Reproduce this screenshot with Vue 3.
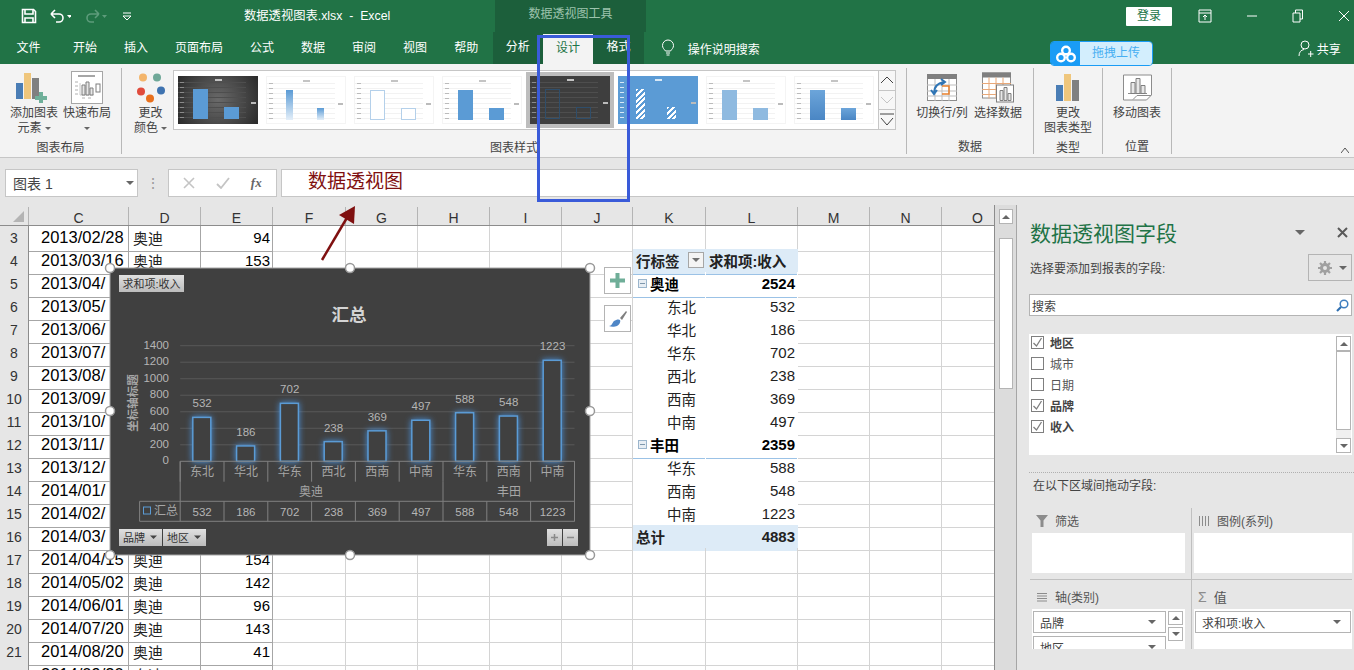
<script setup>
// 透视表行数据
const pivot = {
  4: { k: '行标签', l: '求和项:收入', type: 'head' },
  5: { k: '奥迪', l: 2524, type: 'group' },
  6: { k: '东北', l: 532, type: 'child' },
  7: { k: '华北', l: 186, type: 'child' },
  8: { k: '华东', l: 702, type: 'child' },
  9: { k: '西北', l: 238, type: 'child' },
  10: { k: '西南', l: 369, type: 'child' },
  11: { k: '中南', l: 497, type: 'child' },
  12: { k: '丰田', l: 2359, type: 'group' },
  13: { k: '华东', l: 588, type: 'child' },
  14: { k: '西南', l: 548, type: 'child' },
  15: { k: '中南', l: 1223, type: 'child last' },
  16: { k: '总计', l: 4883, type: 'total' }
}

const sheet = [
  [3, '2013/02/28', '奥迪', 94],
  [4, '2013/03/16', '奥迪', 153],
  [5, '2013/04/'],
  [6, '2013/05/'],
  [7, '2013/06/'],
  [8, '2013/07/'],
  [9, '2013/08/'],
  [10, '2013/09/'],
  [11, '2013/10/'],
  [12, '2013/11/'],
  [13, '2013/12/'],
  [14, '2014/01/'],
  [15, '2014/02/'],
  [16, '2014/03/'],
  [17, '2014/04/15', '奥迪', 154],
  [18, '2014/05/02', '奥迪', 142],
  [19, '2014/06/01', '奥迪', 96],
  [20, '2014/07/20', '奥迪', 143],
  [21, '2014/08/20', '奥迪', 41],
  [22, '2014/09/20', '奥迪', 60]
]
const rows = sheet.map(([no, date, brand, income]) => ({ no, date, brand, income, p: pivot[no] || {} }))

const columns = ['C', 'D', 'E', 'F', 'G', 'H', 'I', 'J', 'K', 'L', 'M', 'N', 'O']

const tabs = ['文件', '开始', '插入', '页面布局', '公式', '数据', '审阅', '视图', '帮助']

// 图表样式缩略图
const thumbs = [
  { cls: 't-dark', bar: 'solid' },
  { cls: '', bar: 'fade' },
  { cls: '', bar: 'outline' },
  { cls: '', bar: 'solid' },
  { cls: 't-black', bar: 'ghost', selected: true },
  { cls: 't-blue', bar: 'hatch' },
  { cls: '', bar: 'pale' },
  { cls: '', bar: 'deep' }
]

const fields = [
  { name: '地区', on: true },
  { name: '城市', on: false },
  { name: '日期', on: false },
  { name: '品牌', on: true },
  { name: '收入', on: true }
]

// 图表坐标
const plotLeft = 180.2
const colW = 43.8
const zeroY = 461.3
const scale = 115.6 / 1400
const series = [
  { name: '东北', v: 532 },
  { name: '华北', v: 186 },
  { name: '华东', v: 702 },
  { name: '西北', v: 238 },
  { name: '西南', v: 369 },
  { name: '中南', v: 497 },
  { name: '华东', v: 588 },
  { name: '西南', v: 548 },
  { name: '中南', v: 1223 }
]
const ticks = [0, 200, 400, 600, 800, 1000, 1200, 1400]
const colX = (i) => plotLeft + i * colW
const barY = (v) => zeroY - v * scale
const handles = [
  [110, 268], [350, 268], [590, 268],
  [110, 411], [590, 411],
  [110, 555], [350, 555], [590, 555]
]
</script>

<template>
  <div class="excel">
    <header class="titlebar">
      <div class="qat">
        <svg width="16" height="16" viewBox="0 0 16 16" class="save">
          <path d="M1.5 1.5h11l2 2v11h-13z" fill="none" stroke="#fff" stroke-width="1.6" />
          <path d="M4 2v4h8V2M4 15v-5h8v5" fill="none" stroke="#fff" stroke-width="1.6" />
        </svg>
        <svg width="22" height="16" viewBox="0 0 22 16" class="undo">
          <path d="M2 6h8a4 4 0 0 1 0 8H7M2 6l4-4M2 6l4 4" fill="none" stroke="#fff" stroke-width="1.6" />
          <path d="M18 7h5l-2.5 3z" fill="#fff" />
        </svg>
        <svg width="22" height="16" viewBox="0 0 22 16" class="redo">
          <path d="M14 6H6a4 4 0 0 0 0 8h3M14 6l-4-4M14 6l-4 4" fill="none" stroke="#5d9c7b" stroke-width="1.6" />
          <path d="M17 7h5l-2.500 3z" fill="#5d9c7b" />
        </svg>
        <svg width="8" height="9" viewBox="0 0 8 9" class="qat-more">
          <path d="M0 1h8" stroke="#fff" />
          <path d="M0 4h8L4 8z" fill="none" stroke="#fff" />
        </svg>
      </div>
      <div class="doc-title">数据透视图表.xlsx &nbsp;-&nbsp; Excel</div>
      <div class="tool-title">数据透视图工具</div>
      <div class="login">登录</div>
      <div class="win-btns">
        <svg width="14" height="14" viewBox="0 0 14 14">
          <path d="M1 1h12v12H1zM1 4h12M7 11V6M5 8l2-2 2 2" fill="none" stroke="#fff" />
        </svg>
        <svg width="12" height="14" viewBox="0 0 12 14"><path d="M1 7h10" stroke="#fff" /></svg>
        <svg width="12" height="14" viewBox="0 0 12 14">
          <path d="M1 4h7v9H1zM3.500 4V1h7v9H8" fill="none" stroke="#fff" />
        </svg>
        <svg width="12" height="14" viewBox="0 0 12 14"><path d="M1 2l10 10M11 2L1 12" stroke="#fff" /></svg>
      </div>
    </header>

    <nav class="tabbar">
      <span v-for="t in tabs" :key="t" class="tab">{{ t }}</span>
      <div class="context-tabs">
        <span class="tab">分析</span>
        <span class="tab active">设计</span>
        <span class="tab">格式</span>
      </div>
      <svg class="bulb" width="14" height="18" viewBox="0 0 14 18">
        <path d="M4.500 12C3 10 1.500 9 1.500 6.500a5.500 5.500 0 0 1 11 0C12.500 9 11 10 9.500 12zM5 14h4M5.500 16h3" fill="none" stroke="#fff" />
      </svg>
      <span class="search-tip">操作说明搜索</span>
      <span class="share">
        <svg width="16" height="17" viewBox="0 0 16 17">
          <circle cx="7" cy="5" r="4" fill="none" stroke="#fff" />
          <path d="M1 16c0-4 2-6 5-6.500M10 14h5.500M12.700 11v6" fill="none" stroke="#fff" />
        </svg>
        共享
      </span>
    </nav>

    <section class="ribbon">
      <div class="rgroup g-layout">
        <div class="rbody">
          <div class="rbtn w54">
            <svg width="36" height="31" viewBox="0 0 36 31">
              <rect x="0" y="11" width="7" height="16" fill="#4a7db5" />
              <rect x="8" y="1" width="7" height="26" fill="#efc67c" />
              <rect x="16" y="6" width="7" height="21" fill="#808080" />
              <path d="M23 20h4v4h4v4h-4v3h-4v-3h-4v-4h4z" fill="#6fb09a" />
            </svg>
            <span>添加图表</span>
            <span>元素<i class="caret small"></i></span>
          </div>
          <div class="rbtn w52">
            <svg width="32" height="33" viewBox="0 0 32 33">
              <rect x="0.500" y="0.500" width="31" height="32" fill="#fff" stroke="#a6a6a6" />
              <path d="M7 5h17" stroke="#a6a6a6" stroke-width="2" />
              <path d="M4 11h3M4 15h3M4 19h3M4 23h3M11 27h3M17 27h3" stroke="#b0b0b0" />
              <path d="M9 12v12M9 24h14" stroke="#c8c8c8" />
              <path d="M11 14h3v10h-3zM15 11h3v13h-3zM19 17h3v7h-3z" fill="#e8e8e8" stroke="#7f7f7f" />
              <rect x="25" y="13" width="4" height="8" fill="#fff" stroke="#7f7f7f" />
            </svg>
            <span>快速布局</span>
            <i class="caret small alone"></i>
          </div>
        </div>
        <div class="rlabel">图表布局</div>
      </div>

      <div class="rgroup g-style">
        <div class="rbody">
          <div class="rbtn color-btn">
            <svg width="30" height="30" viewBox="0 0 30 30">
              <circle cx="7" cy="5" r="4" fill="#f3b56b" />
              <circle cx="21" cy="5" r="4" fill="#6fa898" />
              <circle cx="5" cy="19" r="4" fill="#e04b3c" />
              <circle cx="25" cy="18" r="4" fill="#3f73b0" />
              <circle cx="14" cy="26" r="4" fill="#e8701d" />
            </svg>
            <span>更改</span>
            <span>颜色<i class="caret small"></i></span>
          </div>
          <div class="gallery">
            <div class="thumbs">
              <div v-for="(t, i) in thumbs" :key="i" class="thumb-wrap" :class="{ selected: t.selected }">
                <div class="thumb" :class="t.cls">
                  <i class="thumb-title"></i>
                  <div class="thumb-plot">
                    <i class="thumb-bar tall" :class="t.bar"></i>
                    <i class="thumb-bar short" :class="t.bar"></i>
                  </div>
                  <i class="thumb-legend"></i>
                </div>
              </div>
            </div>
            <div class="gallery-btns">
              <div class="gbtn">
                <svg width="14" height="10" viewBox="0 0 14 10"><path d="M1 8l6-6 6 6" fill="none" stroke="#444" /></svg>
              </div>
              <div class="gbtn">
                <svg width="14" height="10" viewBox="0 0 14 10"><path d="M1 2l6 6 6-6" fill="none" stroke="#c4c4c4" /></svg>
              </div>
              <div class="gbtn">
                <svg width="14" height="14" viewBox="0 0 14 14"><path d="M0 1h14M1 5l6 7 6-7" fill="none" stroke="#444" /></svg>
              </div>
            </div>
          </div>
        </div>
        <div class="rlabel">图表样式</div>
      </div>

      <div class="rgroup g-data">
        <div class="rbody">
          <div class="rbtn w56">
            <svg width="30" height="27" viewBox="0 0 30 27">
              <rect x="0.500" y="0.500" width="29" height="26" fill="#fff" stroke="#8c8c8c" />
              <rect x="0" y="0" width="30" height="5" fill="#7f7f7f" />
              <path d="M0 11h30M0 17h30M0 22h30M8 5v22M15 5v22M22 5v22" stroke="#bdbdbd" />
              <path d="M15 20h7v-8h-7" fill="none" stroke="#e8802c" stroke-width="1.500" />
              <path d="M7 19c0-7 4-10 10-11M14 5l4 3-4 3M4 16l3 4 3-4" fill="none" stroke="#2f75b5" stroke-width="2" />
            </svg>
            <span>切换行/列</span>
          </div>
          <div class="rbtn w56">
            <svg width="32" height="30" viewBox="0 0 32 30">
              <rect x="0.500" y="0.500" width="28" height="25" fill="#fff" stroke="#8c8c8c" />
              <rect x="0" y="0" width="29" height="5" fill="#7f7f7f" />
              <path d="M0 11h29M0 17h29M0 22h29M7 5v21M14 5v21M21 5v21" stroke="#e8a878" />
              <rect x="14.500" y="12.500" width="17" height="17" fill="#fff" stroke="#7f7f7f" />
              <path d="M18 18h3v10h-3zM22 15h3v13h-3zM26 21h3v7h-3z" fill="#e8e8e8" stroke="#7f7f7f" />
            </svg>
            <span>选择数据</span>
          </div>
        </div>
        <div class="rlabel">数据</div>
      </div>

      <div class="rgroup g-type">
        <div class="rbody">
          <div class="rbtn w56">
            <svg width="24" height="27" viewBox="0 0 24 27">
              <rect x="0" y="11" width="7" height="16" fill="#4a7db5" />
              <rect x="8" y="0" width="7" height="27" fill="#efc67c" />
              <rect x="16" y="6" width="7" height="21" fill="#808080" />
            </svg>
            <span>更改</span>
            <span>图表类型</span>
          </div>
        </div>
        <div class="rlabel">类型</div>
      </div>

      <div class="rgroup g-pos">
        <div class="rbody">
          <div class="rbtn w56">
            <svg width="29" height="26" viewBox="0 0 29 26">
              <path d="M0.500 0.500h28v20l-5 5H0.500z" fill="#fff" stroke="#8c8c8c" />
              <path d="M5 19h19" stroke="#8c8c8c" />
              <path d="M8 8h4v11H8zM13 4h4v15h-4zM18 11h4v8h-4z" fill="#e8e8e8" stroke="#7f7f7f" />
              <path d="M10 25l4-4h14" fill="none" stroke="#8c8c8c" />
            </svg>
            <span>移动图表</span>
          </div>
        </div>
        <div class="rlabel">位置</div>
      </div>

      <svg class="collapse" width="8" height="6" viewBox="0 0 8 6"><path d="M0 6l4-5 4 5" fill="none" stroke="#555" /></svg>
    </section>

    <section class="formula-band">
      <div class="name-box">
        <span>图表 1</span>
        <i class="caret"></i>
      </div>
      <div class="band-dots">⋮</div>
      <div class="fx-box">
        <svg width="12" height="12" viewBox="0 0 12 12"><path d="M1 1l10 10M11 1L1 11" stroke="#c4c4c4" stroke-width="1.600" /></svg>
        <svg width="14" height="12" viewBox="0 0 14 12"><path d="M1 7l4 4 8-10" fill="none" stroke="#c4c4c4" stroke-width="1.800" /></svg>
        <span class="fx">fx</span>
      </div>
      <div class="formula-input">数据透视图</div>
    </section>

    <main class="workspace">
      <div class="sheet">
        <div class="col-head">
          <div class="corner"><i></i></div>
          <div v-for="c in columns" :key="c" class="col-letter">{{ c }}</div>
        </div>
        <div v-for="r in rows" :key="r.no" class="row">
          <div class="row-no">{{ r.no }}</div>
          <div class="cell tbl date">{{ r.date }}</div>
          <div class="cell tbl brand">{{ r.brand }}</div>
          <div class="cell tbl num">{{ r.income }}</div>
          <div class="cell"></div>
          <div class="cell"></div>
          <div class="cell"></div>
          <div class="cell"></div>
          <div class="cell"></div>
          <div class="cell pk" :class="r.p.type">
            <i v-if="r.p.type === 'group'" class="fold"></i>{{ r.p.k }}<i v-if="r.p.type === 'head'" class="filter-btn"></i>
          </div>
          <div class="cell pl" :class="r.p.type">{{ r.p.l }}</div>
          <div class="cell"></div>
          <div class="cell"></div>
          <div class="cell"></div>
        </div>

        <svg class="chart" width="500" height="308" viewBox="100 258 500 308">
          <defs>
            <linearGradient id="chip" x1="0" y1="0" x2="0" y2="1">
              <stop offset="0" stop-color="#e0e0e0" />
              <stop offset="1" stop-color="#bcbcbc" />
            </linearGradient>
          </defs>
          <rect x="110" y="268" width="480" height="287" fill="#404040" stroke="#a6a6a6" />

          <rect x="119" y="275" width="65" height="17" fill="url(#chip)" />
          <text x="151.500" y="288" class="chip-text" text-anchor="middle">求和项:收入</text>

          <text x="349" y="321" class="chart-title" text-anchor="middle">汇总</text>

          <line v-for="t in ticks.slice(1)" :key="t" :x1="plotLeft" :x2="574.500" :y1="barY(t)" :y2="barY(t)" class="gridline" />
          <text v-for="t in ticks" :key="'y' + t" x="169" :y="barY(t) + 3" class="tick" text-anchor="end">{{ t }}</text>
          <text class="axis-title" text-anchor="middle" transform="translate(137 403) rotate(-90)">坐标轴标题</text>

          <g v-for="(s, i) in series" :key="i">
            <rect :x="colX(i) + 12.600" :y="barY(s.v)" width="18" :height="s.v * scale" class="bar" />
            <text :x="colX(i) + 21.900" :y="barY(s.v) - 10" class="tick" text-anchor="middle">{{ s.v }}</text>
            <text :x="colX(i) + 21.900" y="476" class="tick cat" text-anchor="middle">{{ s.name }}</text>
            <text :x="colX(i) + 21.900" y="515.500" class="tick" text-anchor="middle">{{ s.v }}</text>
            <line :x1="colX(i)" :x2="colX(i)" y1="461.300" y2="481.700" class="tline" />
            <line :x1="colX(i)" :x2="colX(i)" y1="501.300" y2="521.300" class="tline" />
          </g>
          <path d="M180.200 461.300H574.500V521.300H139.600V501.300H574.500M180.200 461.300V501.300M574.500 461.300V521.300M443 481.700V501.300" class="tline" fill="none" />
          <text x="311" y="496" class="tick cat" text-anchor="middle">奥迪</text>
          <text x="509" y="496" class="tick cat" text-anchor="middle">丰田</text>
          <rect x="143.500" y="507" width="7" height="7" fill="none" stroke="#5b9bd5" />
          <text x="154" y="515" class="tick cat">汇总</text>

          <rect x="119" y="529" width="43" height="17" fill="url(#chip)" />
          <text x="123" y="542" class="chip-text">品牌</text>
          <path d="M150 535.500h7l-3.500 3.500z" fill="#444" />
          <rect x="163" y="529" width="43" height="17" fill="url(#chip)" />
          <text x="167" y="542" class="chip-text">地区</text>
          <path d="M194 535.500h7l-3.500 3.500z" fill="#444" />
          <rect x="547" y="529" width="15" height="17" fill="url(#chip)" />
          <rect x="563" y="529" width="15" height="17" fill="url(#chip)" />
          <path d="M551 537.500h7M554.500 534v7" stroke="#8a8a8a" stroke-width="1.500" />
          <path d="M567 537.500h7" stroke="#8a8a8a" stroke-width="1.500" />

          <circle v-for="(h, i) in handles" :key="'h' + i" :cx="h[0]" :cy="h[1]" r="4.500" class="handle" />
        </svg>

        <div class="chart-side plus">
          <svg width="15" height="15" viewBox="0 0 15 15"><path d="M5.500 0h4v5.500H15v4H9.500V15h-4V9.500H0v-4h5.500z" fill="#6fae98" /></svg>
        </div>
        <div class="chart-side brush">
          <svg width="20" height="20" viewBox="0 0 20 20">
            <path d="M12 9l6-7 1 1-5 8z" fill="#7f7f7f" />
            <path d="M1 17c3 0 3-3 5-5 2-1.500 5-2 6-1 1 2-1 5-3 6-2 .8-6 1-8 0z" fill="#4f86c6" />
          </svg>
        </div>
      </div>

      <div class="vscroll">
        <div class="vs-up"><i class="tri-up"></i></div>
        <div class="vs-thumb"></div>
      </div>

      <aside class="panel">
        <div class="panel-head">
          <h2>数据透视图字段</h2>
          <i class="caret big"></i>
          <svg width="11" height="11" viewBox="0 0 11 11"><path d="M1 1l9 9M10 1l-9 9" stroke="#595959" stroke-width="2" /></svg>
        </div>
        <div class="panel-sub">
          <span>选择要添加到报表的字段:</span>
          <div class="gear-btn">
            <svg width="14" height="14" viewBox="0 0 14 14">
              <circle cx="7" cy="7" r="3.500" fill="none" stroke="#a0a0a0" stroke-width="3" />
              <path d="M7 0v3M7 11v3M0 7h3M11 7h3M2 2l2 2M10 10l2 2M12 2l-2 2M4 10l-2 2" stroke="#a0a0a0" stroke-width="2.200" />
            </svg>
            <i class="caret"></i>
          </div>
        </div>
        <div class="search">
          <span>搜索</span>
          <svg width="13" height="13" viewBox="0 0 13 13">
            <circle cx="8" cy="5" r="3.800" fill="none" stroke="#3f7fc0" stroke-width="1.500" />
            <path d="M5 8l-4 4" stroke="#2f6fb0" stroke-width="2.200" />
          </svg>
        </div>
        <div class="field-list">
          <div class="fields">
            <label v-for="f in fields" :key="f.name" class="field" :class="{ on: f.on }">
              <span class="check">
                <svg v-if="f.on" width="11" height="11" viewBox="0 0 11 11"><path d="M1.500 6l3 3 5-8" fill="none" stroke="#7f7f7f" stroke-width="1.300" /></svg>
              </span>
              {{ f.name }}
            </label>
          </div>
          <div class="list-scroll">
            <div class="ls-btn"><i class="tri-up"></i></div>
            <div class="ls-thumb"></div>
            <div class="ls-gap"></div>
            <div class="ls-btn"><i class="caret"></i></div>
          </div>
        </div>
        <div class="dotted"></div>
        <div class="drag-tip">在以下区域间拖动字段:</div>
        <div class="areas">
          <div class="area sep-r sep-b">
            <div class="area-title">
              <svg width="12" height="12" viewBox="0 0 12 12"><path d="M0 0h12L7.500 5.500V12h-3V5.500z" fill="#8c8c8c" /></svg>
              筛选
            </div>
            <div class="area-box"></div>
          </div>
          <div class="area sep-b">
            <div class="area-title">
              <svg width="12" height="12" viewBox="0 0 12 12"><path d="M1.500 1v10M4.500 1v10M7.500 1v10M10.500 1v10" stroke="#8c8c8c" /></svg>
              图例(系列)
            </div>
            <div class="area-box"></div>
          </div>
          <div class="area sep-r">
            <div class="area-title">
              <svg width="12" height="12" viewBox="0 0 12 12"><path d="M1 2.500h10M1 5h10M1 7.500h10M1 10h10" stroke="#8c8c8c" /></svg>
              轴(类别)
            </div>
            <div class="area-box axis-box">
              <div class="axis-items">
                <div class="item">品牌<i class="caret"></i></div>
                <div class="item">地区<i class="caret"></i></div>
              </div>
              <div class="axis-scroll">
                <div class="ls-btn"><i class="tri-up"></i></div>
                <div class="ls-btn"><i class="caret"></i></div>
              </div>
            </div>
          </div>
          <div class="area">
            <div class="area-title value-title">
              <span class="sigma">Σ</span>
              值
            </div>
            <div class="area-box value-box">
              <div class="item">求和项:收入<i class="caret"></i></div>
            </div>
          </div>
        </div>
      </aside>
    </main>

    <!-- 拖拽上传悬浮条 -->
    <div class="upload">
      <div class="upload-icon">
        <svg width="20" height="18" viewBox="0 0 20 18">
          <circle cx="10" cy="5.500" r="3.800" fill="none" stroke="#fff" stroke-width="2.400" />
          <circle cx="5" cy="12.500" r="3.800" fill="none" stroke="#fff" stroke-width="2.400" />
          <circle cx="15" cy="12.500" r="3.800" fill="none" stroke="#fff" stroke-width="2.400" />
        </svg>
      </div>
      <div class="upload-text">拖拽上传</div>
    </div>

    <!-- 截图上的标注 -->
    <div class="mark-rect"></div>
    <svg class="mark-arrow" width="40" height="58" viewBox="0 0 40 58">
      <path d="M2 56L28 12" stroke="#7f1010" stroke-width="2.500" />
      <path d="M35 2L34 20 19 11z" fill="#7f1010" />
    </svg>
  </div>
</template>

<style scoped>
.excel {
  position: relative;
  width: 1354px;
  height: 670px;
  overflow: hidden;
  background: #e6e6e6;
  color: #444;
  font-family: "Liberation Sans", "Noto Sans CJK SC", sans-serif;
  font-size: 12px;
}

i {
  font-style: normal;
}

/* 标题栏 */
.titlebar {
  display: flex;
  align-items: center;
  height: 32px;
  background: #217346;
  color: #fff;
}
.qat {
  display: flex;
  align-items: center;
  width: 244px;
  padding-left: 21px;
  box-sizing: border-box;
}
.save {
  margin-right: 12px;
}
.undo {
  margin-right: 14px;
}
.qat-more {
  margin-left: 16px;
}
.doc-title {
  width: 251px;
  margin-top: -3px;
  font-size: 12.300px;
}
.tool-title {
  width: 151px;
  height: 32px;
  line-height: 28px;
  text-align: center;
  background: #1c5f3b;
  color: #9cc3ad;
}
.login {
  width: 46px;
  height: 19px;
  margin-left: 480px;
  background: #fff;
  color: #217346;
  line-height: 19px;
  text-align: center;
  border-radius: 1px;
}
.win-btns {
  display: flex;
  align-items: center;
  gap: 34px;
  margin-left: 26px;
}

/* 选项卡 */
.tabbar {
  display: flex;
  align-items: center;
  height: 32px;
  padding-left: 3px;
  background: #217346;
  color: #fff;
}
.tab {
  display: block;
  padding: 0 13.500px;
  line-height: 30px;
  white-space: nowrap;
}
.tab:first-child {
  padding-right: 19px;
}
.context-tabs {
  display: flex;
  align-items: stretch;
  width: 151px;
  height: 32px;
  margin-left: 1px;
  padding-left: 0;
  background: #1c5f3b;
  box-sizing: border-box;
}
.context-tabs .tab {
  width: 50.300px;
  padding: 0;
  text-align: center;
}
.context-tabs .tab.active {
  margin-top: 2px;
  background: #f3f3f3;
  color: #217346;
  line-height: 28px;
}
.bulb {
  margin-left: 17px;
}
.search-tip {
  margin-left: 13px;
}
.share {
  display: flex;
  align-items: center;
  gap: 3px;
  margin-left: 538px;
}

/* 功能区 */
.ribbon {
  position: relative;
  display: flex;
  height: 94px;
  background: #f3f3f3;
  border-bottom: 1px solid #c6c6c6;
  box-sizing: border-box;
}
.rgroup {
  display: flex;
  flex-direction: column;
  height: 86px;
  margin-top: 4px;
  border-right: 1px solid #b8b8b8;
  box-sizing: border-box;
}
.g-layout { width: 122px; }
.g-style { width: 785px; }
.g-data { width: 127px; }
.g-type { width: 69px; }
.g-pos { width: 69px; }
.rbody {
  display: flex;
  flex: 1;
  justify-content: center;
}
.g-layout .rbody {
  justify-content: flex-start;
  padding-left: 7px;
}
.g-style .rbody {
  justify-content: flex-start;
  padding-left: 6px;
}
.rlabel {
  height: 19px;
  line-height: 24px;
  text-align: center;
}
.rbtn {
  display: flex;
  flex-direction: column;
  align-items: center;
  line-height: 15px;
  white-space: nowrap;
  padding-top: 3px;
}
.rbtn svg {
  height: 33px;
  margin-bottom: 2px;
}
.w54 { width: 54px; }
.w52 { width: 52px; }
.w56 { width: 56px; }
.color-btn {
  width: 45px;
}
.caret {
  display: inline-block;
  width: 0;
  height: 0;
  border-left: 4px solid transparent;
  border-right: 4px solid transparent;
  border-top: 4px solid #666;
}
.caret.small {
  margin-left: 3px;
  border-left-width: 3px;
  border-right-width: 3px;
  border-top-width: 3px;
  vertical-align: middle;
}
.caret.small.alone {
  margin: 6px 0 0;
}
.gallery {
  display: flex;
  width: 723px;
  height: 60px;
  margin-top: 2px;
  background: #fff;
  border: 1px solid #c6c6c6;
  box-sizing: border-box;
}
.thumbs {
  display: flex;
  flex: 1;
  align-items: center;
  padding-left: 4px;
  gap: 8px;
}
.thumb-wrap {
  display: flex;
}
.thumb-wrap.selected {
  margin: 0 -4px;
  padding: 4px;
  background: #bdbdbd;
}
.thumb {
  position: relative;
  display: flex;
  flex-direction: column;
  align-items: center;
  width: 80px;
  height: 48px;
  box-sizing: border-box;
  border: 1px solid #f4f4f4;
  background: #fff;
}
.thumb-title {
  width: 7px;
  height: 2px;
  margin-top: 3px;
  background: #c4c4c4;
}
.thumb-legend {
  position: absolute;
  right: 2px;
  top: 26px;
  width: 5px;
  height: 2px;
  background: #bbb;
}
.thumb-plot {
  display: flex;
  align-items: flex-end;
  align-self: flex-start;
  gap: 16px;
  width: 68px;
  height: 37px;
  margin: 1px 0 0 0;
  padding-left: 15px;
  box-sizing: border-box;
  background:
    repeating-linear-gradient(to bottom, #bbb 0 1px, transparent 1px 5px) 2px 0 / 4px 100% no-repeat,
    repeating-linear-gradient(to bottom, #f2f2f2 0 1px, transparent 1px 5px);
}
.thumb-bar {
  width: 15px;
}
.thumb-bar.tall { height: 30px; }
.thumb-bar.short { height: 12px; }
.thumb-bar.solid { background: #5b9bd5; }
.thumb-bar.fade { width: 7px; margin: 0 4px; background: linear-gradient(to bottom, #5b9bd5, #e4eff9); }
.thumb-bar.outline { background: #fff; border: 1px solid #b4d0ea; box-sizing: border-box; }
.thumb-bar.pale { background: #8fbae0; }
.thumb-bar.deep { background: linear-gradient(to bottom, #6ca5da, #4a86c4); }
.thumb-bar.ghost { background: transparent; border: 1px solid #2f4e6b; box-sizing: border-box; }
.thumb-bar.hatch { width: 9px; margin: 0 3px; background: repeating-linear-gradient(135deg, #fff 0 2px, #5b9bd5 2px 4px); }
.t-dark {
  border: 0;
  background: radial-gradient(circle, #6a6a6a, #2a2a2a);
}
.t-dark .thumb-plot,
.t-black .thumb-plot {
  background:
    repeating-linear-gradient(to bottom, #8a8a8a 0 1px, transparent 1px 5px) 2px 0 / 4px 100% no-repeat,
    repeating-linear-gradient(to bottom, #4e4e4e 0 1px, transparent 1px 5px);
}
.t-black {
  border: 0;
  background: #3e3e3e;
}
.t-blue {
  border: 0;
  background: #5b9bd5;
}
.t-blue .thumb-plot {
  background: repeating-linear-gradient(to bottom, #d8e8f6 0 1px, transparent 1px 5px) 2px 0 / 4px 100% no-repeat;
}
.t-blue .thumb-title {
  background: #d8e8f6;
}
.gallery-btns {
  display: flex;
  flex-direction: column;
  width: 17px;
}
.gbtn {
  display: flex;
  flex: 1;
  align-items: center;
  justify-content: center;
  background: #f7f7f7;
  border-left: 1px solid #c6c6c6;
  border-bottom: 1px solid #c6c6c6;
}
.gbtn:last-child {
  border-bottom: 0;
}
.collapse {
  position: absolute;
  right: 5px;
  bottom: 4px;
}

/* 编辑栏 */
.formula-band {
  display: flex;
  align-items: flex-start;
  height: 47px;
  padding: 11px 0 0 5px;
  box-sizing: border-box;
  background: #e6e6e6;
}
.name-box {
  display: flex;
  align-items: center;
  justify-content: space-between;
  width: 133px;
  height: 28px;
  padding: 0 3px 0 7px;
  box-sizing: border-box;
  background: #fff;
  border: 1px solid #c6c6c6;
  font-size: 14px;
}
.band-dots {
  width: 30px;
  line-height: 28px;
  text-align: center;
  color: #999;
  font-size: 14px;
}
.fx-box {
  display: flex;
  align-items: center;
  justify-content: space-around;
  width: 109px;
  height: 28px;
  padding: 0 4px;
  box-sizing: border-box;
  background: #fff;
  border: 1px solid #c6c6c6;
}
.fx {
  font-family: "Liberation Serif", serif;
  font-style: italic;
  font-weight: 700;
  font-size: 13px;
  color: #666;
}
.formula-input {
  flex: 1;
  height: 28px;
  margin-left: 4px;
  padding-left: 26px;
  box-sizing: border-box;
  background: #fff;
  border: 1px solid #c6c6c6;
  border-right: 0;
  color: #7f1010;
  font-size: 19px;
  line-height: 23px;
}

/* 工作表 */
.workspace {
  display: flex;
  height: 465px;
}
.sheet {
  position: relative;
  width: 995px;
  overflow: hidden;
  border-right: 1px solid #8c8c8c;
  box-sizing: border-box;
  background: #fff;
}
.col-head,
.row {
  display: grid;
  grid-template-columns: 29px 100px 72px 72px 73px 72px 72px 72px 71px 73px 92px 72px 72px 72px;
  width: 1014px;
}
.col-head {
  height: 20px;
  background: #e6e6e6;
  border-bottom: 1px solid #8c8c8c;
}
.corner {
  position: relative;
  margin-top: 2px;
  border-right: 1px solid #b4b4b4;
}
.corner i {
  position: absolute;
  right: 4px;
  bottom: 3px;
  width: 0;
  height: 0;
  border-left: 11px solid transparent;
  border-bottom: 11px solid #b4b4b4;
}
.col-letter {
  margin-top: 2px;
  border-right: 1px solid #b4b4b4;
  text-align: center;
  font-size: 14px;
  line-height: 22px;
  color: #333;
  height: 18px;
}
.row {
  height: 23px;
}
.row-no {
  background: #e6e6e6;
  border-right: 1px solid #8c8c8c;
  border-bottom: 1px solid #b4b4b4;
  box-sizing: border-box;
  text-align: center;
  line-height: 25px;
  font-size: 14px;
  color: #333;
}
.cell {
  display: flex;
  align-items: center;
  box-sizing: border-box;
  padding-bottom: 3px;
  border-right: 1px solid #d4d4d4;
  border-bottom: 1px solid #d4d4d4;
  color: #000;
  font-size: 15px;
  white-space: nowrap;
  overflow: hidden;
}
.cell.tbl {
  border-color: #a6a6a6;
}
.date {
  padding-left: 12px;
  font-size: 16.500px;
}
.brand {
  padding-left: 4px;
  font-size: 15px;
  color: #222;
}
.num {
  justify-content: flex-end;
  padding-right: 2px;
  font-size: 15px;
}
.pk {
  padding-left: 3px;
  font-size: 14.500px;
  color: #222;
}
.pl {
  justify-content: flex-end;
  padding-right: 2px;
  font-size: 15px;
  color: #222;
}
.pk.child {
  padding-left: 34px;
}
.pk.child,
.pl.child {
  border-color: #fff;
}
.pk.last,
.pl.last {
  border-bottom-color: #9bc2e6;
}
.pk.head,
.pl.head,
.pk.total,
.pl.total {
  background: #ddebf7;
  font-weight: 700;
  border-right-color: #ddebf7;
}
.pk.total,
.pl.total {
  border-bottom-color: #ddebf7;
}
.pk.head,
.pl.head {
  border-bottom-color: #9bc2e6;
}
.pl.head {
  justify-content: flex-start;
  padding: 0 0 3px 3px;
  font-size: 14.500px;
}
.pk.group,
.pl.group {
  font-weight: 700;
  color: #000;
  border-right-color: #fff;
  border-bottom-color: #9bc2e6;
}
.pk.group {
  padding-left: 2px;
}
.fold {
  display: inline-block;
  width: 9px;
  height: 9px;
  margin: 0 3px;
  box-sizing: border-box;
  border: 1px solid #9bb5cc;
  background: linear-gradient(#7f98ad, #7f98ad) center / 5px 1px no-repeat #e8eef4;
}
.filter-btn {
  display: block;
  width: 16px;
  height: 16px;
  margin-left: 8px;
  box-sizing: border-box;
  border: 1px solid #a6a6a6;
  background: #f4f4f4;
  position: relative;
}
.filter-btn::after {
  content: "";
  position: absolute;
  left: 3px;
  top: 5px;
  border-left: 4px solid transparent;
  border-right: 4px solid transparent;
  border-top: 4px solid #707070;
}

/* 图表层 */
.chart {
  position: absolute;
  left: 100px;
  top: 53px;
}
.chart text {
  font-family: "Liberation Sans", "Noto Sans CJK SC", sans-serif;
}
.chart-title {
  font-size: 17.500px;
  font-weight: 700;
  fill: #d4d4d4;
}
.tick {
  font-size: 11.500px;
  fill: #b5b5b5;
}
.cat {
  font-size: 12px;
  fill: #a6a6a6;
}
.axis-title {
  font-size: 11.500px;
  font-weight: 700;
  fill: #a6a6a6;
}
.chip-text {
  font-size: 11px;
  fill: #333;
}
.gridline {
  stroke: #585858;
}
.tline {
  stroke: #808080;
}
.bar {
  fill: #404040;
  stroke: #5b9bd5;
  stroke-width: 1.500;
  filter: drop-shadow(0 0 3px #4a90d9);
}
.handle {
  fill: #fff;
  stroke: #999;
  stroke-width: 1.500;
}
.chart-side {
  position: absolute;
  left: 604px;
  display: flex;
  align-items: center;
  justify-content: center;
  width: 27px;
  height: 27px;
  box-sizing: border-box;
  background: #fff;
  border: 1px solid #b4b4b4;
}
.chart-side.plus {
  top: 62px;
}
.chart-side.brush {
  top: 100px;
}

/* 纵向滚动条 */
.vscroll {
  display: flex;
  flex-direction: column;
  align-items: center;
  width: 21px;
  padding-top: 4px;
  background: #dcdcdc;
  box-sizing: border-box;
}
.vs-up {
  display: flex;
  align-items: center;
  justify-content: center;
  width: 14px;
  height: 15px;
  background: #fff;
  border: 1px solid #b4b4b4;
  box-sizing: border-box;
}
.tri-up {
  display: block;
  width: 0;
  height: 0;
  border-left: 4px solid transparent;
  border-right: 4px solid transparent;
  border-bottom: 4px solid #666;
}
.vs-thumb {
  width: 14px;
  height: 151px;
  margin-top: 14px;
  background: #fff;
  border: 1px solid #b4b4b4;
  box-sizing: border-box;
}

/* 字段面板 */
.panel {
  flex: 1;
  padding: 16px 2px 0 13px;
  background: #e6e6e6;
  border-left: 1px solid #a6a6a6;
  box-sizing: border-box;
}
.panel-head {
  display: flex;
  align-items: center;
  height: 22px;
}
.panel-head h2 {
  flex: 1;
  margin: 0;
  font-size: 21px;
  font-weight: 400;
  color: #217346;
  white-space: nowrap;
}
.panel-head .caret.big {
  border-left-width: 5px;
  border-right-width: 5px;
  border-top-width: 5px;
  margin-right: 32px;
}
.panel-head svg {
  margin-right: 4px;
}
.panel-sub {
  display: flex;
  align-items: center;
  justify-content: space-between;
  height: 27px;
  margin-top: 11px;
}
.gear-btn {
  display: flex;
  align-items: center;
  justify-content: space-between;
  width: 44px;
  height: 27px;
  padding: 0 4px 0 9px;
  box-sizing: border-box;
  border: 1px solid #b4b4b4;
}
.search {
  display: flex;
  align-items: center;
  justify-content: space-between;
  height: 22px;
  margin: 13px 0 0 -1px;
  padding: 0 2px;
  box-sizing: border-box;
  background: #fff;
  border: 1px solid #b4b4b4;
}
.field-list {
  display: flex;
  justify-content: space-between;
  height: 121px;
  margin: 18px 0 0 -1px;
  background: #fff;
}
.fields {
  display: flex;
  flex-direction: column;
  margin-top: -2px;
}
.field {
  display: flex;
  align-items: center;
  gap: 6px;
  height: 21px;
  padding-left: 2px;
  color: #555;
}
.field.on {
  font-weight: 700;
  color: #444;
}
.check {
  display: flex;
  align-items: center;
  justify-content: center;
  width: 13px;
  height: 13px;
  box-sizing: border-box;
  background: #fff;
  border: 1px solid #7f7f7f;
}
.list-scroll {
  display: flex;
  flex-direction: column;
  width: 15px;
  margin: 2px 1px 2px 0;
}
.ls-btn {
  display: flex;
  align-items: center;
  justify-content: center;
  width: 15px;
  height: 15px;
  box-sizing: border-box;
  background: #fff;
  border: 1px solid #b4b4b4;
}
.ls-thumb {
  flex: 1;
  border: 1px solid #b4b4b4;
}
.ls-gap {
  height: 8px;
  background: #f0f0f0;
}
.dotted {
  height: 0;
  margin: 17px -2px 0 -1px;
  border-top: 1px dotted #b0b0b0;
}
.drag-tip {
  margin: 5px 0 0 3px;
  line-height: 16px;
}
.areas {
  display: grid;
  grid-template-columns: 162px 1fr;
  margin-top: 14px;
}
.area {
  padding: 0 0 6px 2px;
  box-sizing: border-box;
}
.sep-r {
  border-right: 1px solid #c0c0c0;
}
.sep-b {
  border-bottom: 1px solid #c0c0c0;
}
.area:nth-child(even) {
  padding-left: 2px;
}
.area-title {
  display: flex;
  align-items: center;
  gap: 7px;
  height: 25px;
  padding-left: 4px;
  color: #555;
}
.area-box {
  height: 40px;
  background: #fff;
}
.area:nth-child(odd) .area-box {
  margin-right: 6px;
}
.area:nth-child(3),
.area:nth-child(4) {
  padding-top: 4px;
  padding-bottom: 0;
}
.value-title {
  font-size: 13px;
}
.sigma {
  font-size: 14px;
  color: #8c8c8c;
}
.axis-box {
  display: flex;
  gap: 2px;
  overflow: hidden;
  padding: 2px 2px 0 1px;
  box-sizing: border-box;
}
.axis-items {
  flex: 1;
  display: flex;
  flex-direction: column;
  gap: 3px;
}
.item {
  display: flex;
  align-items: center;
  justify-content: space-between;
  flex: none;
  height: 22px;
  padding: 0 9px 0 6px;
  box-sizing: border-box;
  background: #fff;
  border: 1px solid #b4b4b4;
  color: #444;
}
.axis-scroll {
  display: flex;
  flex-direction: column;
  gap: 2px;
}
.axis-scroll .ls-btn {
  height: 14px;
}
.value-box {
  padding: 2px 1px 0;
  box-sizing: border-box;
}

/* 悬浮和标注 */
.upload {
  position: absolute;
  left: 1050px;
  top: 41px;
  display: flex;
  width: 103px;
  height: 25px;
  overflow: hidden;
  border: 1px solid #1a9cf5;
  border-radius: 4px;
  box-sizing: border-box;
}
.upload-icon {
  display: flex;
  align-items: center;
  justify-content: center;
  width: 29px;
  background: #1a9cf5;
}
.upload-text {
  flex: 1;
  background: #d3eefd;
  color: #47aef2;
  text-align: center;
  line-height: 23px;
}
.mark-rect {
  position: absolute;
  left: 537px;
  top: 35px;
  width: 93px;
  height: 167px;
  box-sizing: border-box;
  border: 3px solid #3a5bd9;
}
.mark-arrow {
  position: absolute;
  left: 320px;
  top: 204px;
}
</style>

<style>
html,
body {
  margin: 0;
  overflow: hidden;
}
</style>
